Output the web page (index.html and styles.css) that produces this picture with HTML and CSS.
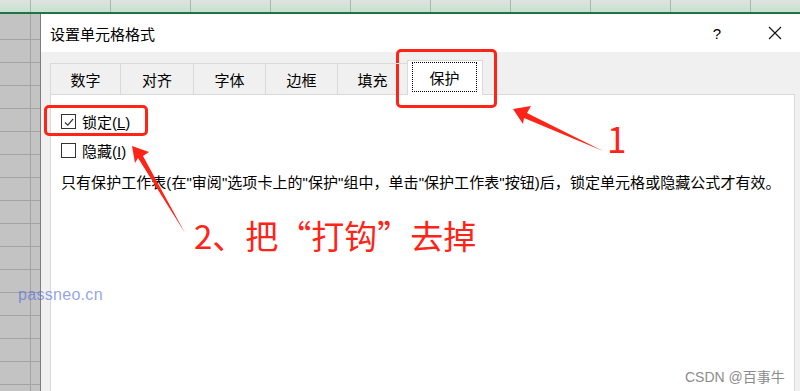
FILE: index.html
```html
<!DOCTYPE html>
<html lang="zh-CN">
<head>
  <meta charset="UTF-8">
  <title>设置单元格格式</title>
  <link rel="stylesheet" href="styles.css">
</head>
<body>
  <div class="sheet-top"></div>

  <div class="workspace">
    <div class="sheet"></div>

    <div class="dialog">
      <div class="titlebar">
        <span class="title">设置单元格格式</span>
        <span class="help">?</span>
        <span class="close">
          <svg width="14" height="14" viewBox="0 0 14 14"><path d="M1 1L13 13M13 1L1 13" stroke="#111" stroke-width="1.1" fill="none"/></svg>
        </span>
      </div>

      <div class="tabs">
        <div class="tab w70">数字</div>
        <div class="tab w73">对齐</div>
        <div class="tab w72">字体</div>
        <div class="tab w72">边框</div>
        <div class="tab w70">填充</div>
        <div class="tab active"><span class="focus">保护</span></div>
      </div>

      <div class="panel">
        <label class="check">
          <span class="box">
            <svg width="12" height="12" viewBox="0 0 12 12"><path d="M2 6.5L4.8 9.2L10.2 2.8" stroke="#333" stroke-width="1.2" fill="none"/></svg>
          </span>
          <span>锁定(<u>L</u>)</span>
        </label>
        <label class="check">
          <span class="box"></span>
          <span>隐藏(<u>I</u>)</span>
        </label>
        <p class="note">只有保护工作表(在"审阅"选项卡上的"保护"组中，单击"保护工作表"按钮)后，锁定单元格或隐藏公式才有效。</p>
      </div>
    </div>
  </div>

  <!-- annotations drawn over the screenshot -->
  <div class="mark mark-tab"></div>
  <div class="mark mark-lock"></div>
  <svg class="arrows" width="800" height="391" viewBox="0 0 800 391">
    <polygon points="513,109 531,106 527,113 603,151 524,118 523,124" fill="#ff2418"/>
    <polygon points="132,146 149,152 143,156 185,233 138,158 135,163" fill="#ff2418"/>
  </svg>
  <div class="step step-one">1</div>
  <div class="step step-two">2、把“打钩”去掉</div>

  <div class="watermark">passneo.cn</div>
  <div class="credit">CSDN @百事牛</div>
</body>
</html>
```

FILE: styles.css
```css
:root {
  --red: #ff2418;
  --line: #d9d9d9;
  --face: #f0f0f0;
  --grid: #c3c3c3;
}

body {
  margin: 0;
  width: 800px;
  height: 391px;
  overflow: hidden;
  position: relative;
  background: var(--grid);
  font-family: "Liberation Sans", "Noto Sans CJK SC", sans-serif;
  color: #000;
}

.sheet-top {
  height: 12px;
  border-bottom: 2px solid #217346;
  background:
    linear-gradient(90deg, transparent 30px, #a3b9ab 30px 31px, transparent 31px) 0 0 / 80px 100%,
    linear-gradient(#dfe3e0, #c6e2d0);
}

.workspace {
  display: flex;
  height: 377px;
}

.sheet {
  flex: 0 0 40px;
  background:
    linear-gradient(90deg, transparent 30px, #a3a3a3 30px 31px, transparent 31px),
    repeating-linear-gradient(180deg, transparent 0 22px, #a3a3a3 22px 23px) 0 3px,
    var(--grid);
}

.dialog {
  flex: 1;
  min-width: 0;
  display: flex;
  flex-direction: column;
  background: var(--face);
  border-left: 1px solid #7d7d7d;
}

.titlebar {
  height: 38px;
  background: #fff;
  display: flex;
  align-items: center;
  padding-left: 9px;
  font-size: 15px;
  font-family: "Noto Sans CJK SC", sans-serif;
}

.title {
  flex: 1;
}

.help {
  font-family: "Liberation Sans", sans-serif;
  font-size: 15px;
  margin-right: 47px;
}

.close {
  display: flex;
  margin-right: 18px;
}

.tabs {
  display: flex;
  align-items: flex-end;
  height: 31px;
  margin-top: 11px;
  padding-left: 9px;
  position: relative;
  z-index: 1;
}

.tab {
  box-sizing: border-box;
  height: 31px;
  border: 1px solid var(--line);
  border-bottom: none;
  margin-left: -1px;
  display: flex;
  align-items: center;
  justify-content: center;
  font-size: 15px;
  font-family: "Noto Sans CJK SC", sans-serif;
}

.tab:first-child { margin-left: 0; }
.w70 { width: 71px; }
.w72 { width: 73px; }
.w73 { width: 74px; }

.tab.active {
  width: 76px;
  height: 35px;
  margin-bottom: -1px;
  background: #fff;
  align-items: flex-start;
  padding-top: 1px;
}

.focus {
  box-sizing: border-box;
  width: 65px;
  height: 30px;
  margin-left: -1px;
  border: 1px dotted #000;
  display: flex;
  align-items: center;
  justify-content: center;
}

.panel {
  flex: 1;
  margin: 0 5px 0 9px;
  background: #fff;
  border: 1px solid var(--line);
  border-bottom: none;
  padding: 12px 0 0 10px;
}

.check {
  display: flex;
  align-items: center;
  gap: 6px;
  height: 29px;
  font-size: 15px;
}

.box {
  box-sizing: border-box;
  width: 15px;
  height: 15px;
  border: 1px solid #333;
  display: flex;
  align-items: center;
  justify-content: center;
}

.note {
  margin: 7px 0 0;
  font-size: 15px;
  line-height: 22px;
  letter-spacing: 0.05px;
  white-space: nowrap;
}

.mark {
  position: absolute;
  box-sizing: border-box;
  border: 3px solid var(--red);
  border-radius: 5px;
}

.mark-tab {
  left: 396px;
  top: 49px;
  width: 101px;
  height: 59px;
}

.mark-lock {
  left: 44px;
  top: 105px;
  width: 104px;
  height: 31px;
}

.arrows {
  position: absolute;
  left: 0;
  top: 0;
}

.step {
  position: absolute;
  color: var(--red);
  font-family: "Noto Sans CJK SC", sans-serif;
  line-height: 1;
  white-space: nowrap;
}

.step-one {
  left: 607px;
  top: 120px;
  font-size: 35px;
}

.step-two {
  left: 194px;
  top: 219px;
  font-size: 33px;
}

.watermark {
  position: absolute;
  left: 18px;
  top: 286px;
  font-size: 16px;
  color: rgba(80, 105, 225, 0.62);
  letter-spacing: 0.3px;
}

.credit {
  position: absolute;
  left: 685px;
  top: 366px;
  font-size: 14px;
  color: #8c8c8c;
  font-family: "Liberation Sans", "Noto Sans CJK SC", sans-serif;
}
```
